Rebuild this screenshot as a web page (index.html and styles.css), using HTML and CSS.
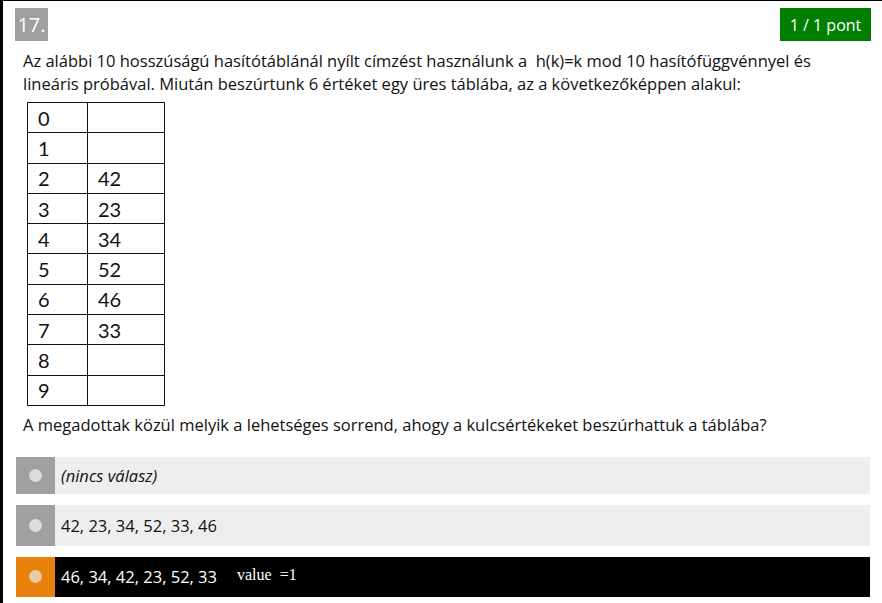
FILE: index.html
```html
<!DOCTYPE html>
<html lang="hu">
<head>
<meta charset="utf-8">
<link rel="stylesheet" href="styles.css">
</head>
<body>
<div class="page">
  <div class="head">
    <span class="num">17.</span>
    <span class="score">1 / 1 pont</span>
  </div>
  <p class="intro">Az alábbi 10 hosszúságú hasítótáblánál nyílt címzést használunk a&nbsp; h(k)=k mod 10 hasítófüggvénnyel és<br>lineáris próbával. Miután beszúrtunk 6 értéket egy üres táblába, az a következőképpen alakul:</p>
  <table class="hash">
    <tr><td>0</td><td></td></tr>
    <tr><td>1</td><td></td></tr>
    <tr><td>2</td><td>42</td></tr>
    <tr><td>3</td><td>23</td></tr>
    <tr><td>4</td><td>34</td></tr>
    <tr><td>5</td><td>52</td></tr>
    <tr><td>6</td><td>46</td></tr>
    <tr><td>7</td><td>33</td></tr>
    <tr><td>8</td><td></td></tr>
    <tr><td>9</td><td></td></tr>
  </table>
  <p class="question">A megadottak közül melyik a lehetséges sorrend, ahogy a kulcsértékeket beszúrhattuk a táblába?</p>
  <div class="options">
    <div class="opt opt-first">
      <span class="mark"><span class="dot"></span></span>
      <span class="label"><em>(nincs válasz)</em></span>
    </div>
    <div class="opt">
      <span class="mark"><span class="dot"></span></span>
      <span class="label">42, 23, 34, 52, 33, 46</span>
    </div>
    <div class="opt opt-sel">
      <span class="mark"><span class="dot"></span></span>
      <span class="label">46, 34, 42, 23, 52, 33</span>
      <span class="value">value&nbsp; =1</span>
    </div>
  </div>
</div>
</body>
</html>
```
FILE: styles.css
```css
html, body {
  margin: 0;
  padding: 0;
  background: #fff;
}
.page {
  width: 879px;
  height: 602px;
  border-left: 3px solid #000;
  border-top: 1px solid #000;
  font-family: "Open Sans", sans-serif;
  color: #111;
  box-sizing: content-box;
}
.head {
  display: flex;
  justify-content: space-between;
  align-items: flex-start;
  padding: 7px 11px 0 12px;
}
.num {
  display: flex;
  align-items: center;
  justify-content: center;
  width: 33px;
  height: 33px;
  background: #a0a0a0;
  color: #fff;
  font-size: 20px;
}
.score {
  display: flex;
  align-items: center;
  justify-content: center;
  width: 91px;
  height: 33px;
  background: #007f00;
  color: #fff;
  font-size: 16px;
}
.intro {
  margin: 8px 0 0 20px;
  font-size: 16.5px;
  line-height: 23px;
}
.hash {
  margin: 7px 0 0 24px;
  border-collapse: collapse;
  font-family: "Lato", "Open Sans", sans-serif;
  font-size: 20px;
}
.hash td {
  border: 1px solid #111;
  height: 30.3px;
  padding: 0 0 0 10px;
  box-sizing: border-box;
  line-height: 28px;
  vertical-align: middle;
}
.hash td:first-child {
  width: 60px;
}
.hash td:last-child {
  width: 77px;
}
.question {
  margin: 7px 0 0 20px;
  font-size: 16.5px;
  line-height: 23px;
}
.options {
  display: flex;
  flex-direction: column;
  gap: 11px;
  margin: 21px 0 0 13px;
  width: 854px;
}
.opt {
  display: flex;
  align-items: center;
  height: 41px;
  background: #eee;
  font-size: 16.5px;
}
.opt-first {
  height: 37px;
}
.mark {
  display: flex;
  align-items: center;
  justify-content: center;
  align-self: stretch;
  width: 39px;
  background: #a0a0a0;
}
.dot {
  width: 13px;
  height: 13px;
  border-radius: 50%;
  background: #dcdcdc;
}
.label {
  margin-left: 6px;
}
.opt-sel {
  background: #000;
  color: #fff;
  height: 40px;
}
.opt-sel .mark {
  background: #e8820c;
}
.opt-sel .dot {
  background: #e8c9a8;
}
.value {
  margin-left: 20px;
  font-family: "Liberation Serif", serif;
  font-size: 16px;
  color: #fff;
  position: relative;
  top: -2px;
}
```
